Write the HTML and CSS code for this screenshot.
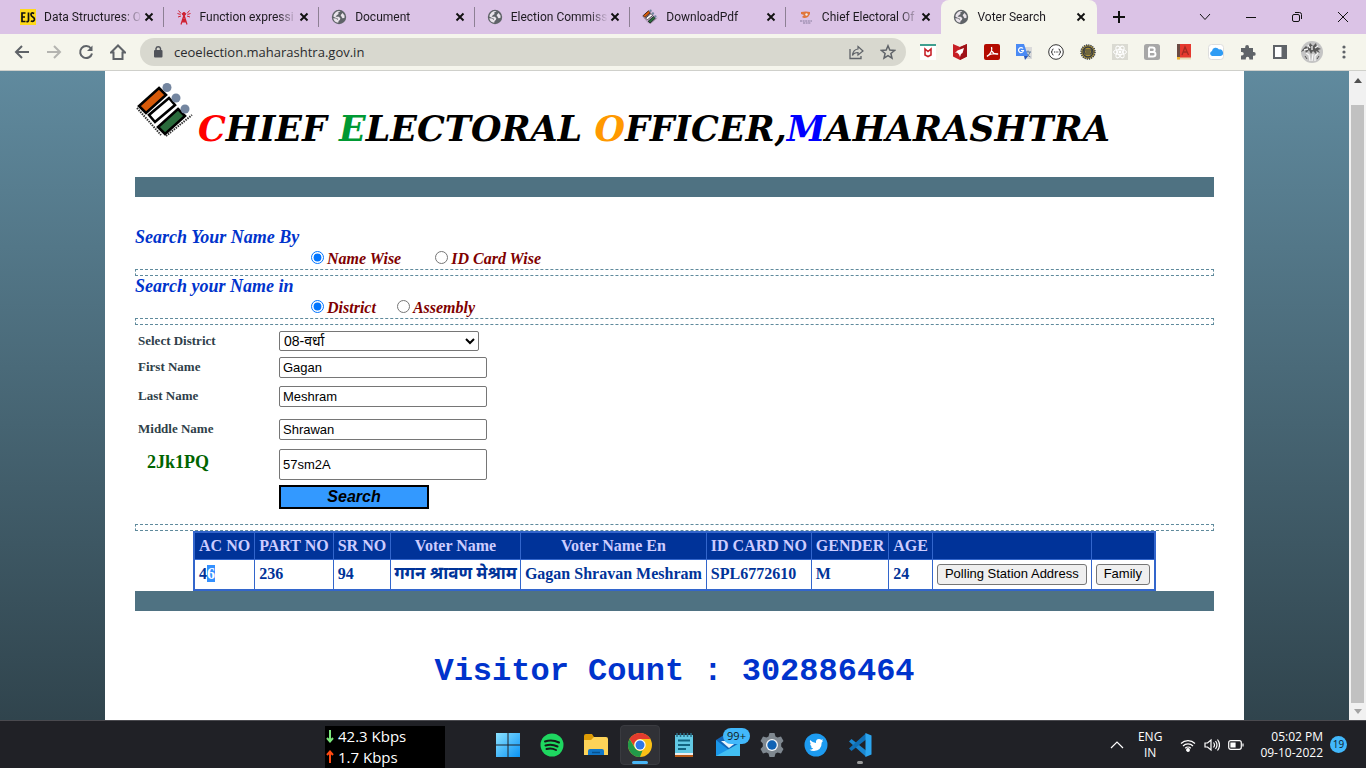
FILE: index.html
```html
<!DOCTYPE html>
<html lang="en">
<head>
<meta charset="utf-8">
<title>Voter Search</title>
<link rel="stylesheet" href="styles.css">
</head>
<body>
<svg class="defs" aria-hidden="true">
  <defs>
    <symbol id="globe" viewBox="0 0 16 16"><circle cx="8" cy="8" r="7.200" fill="#5f6368"/><path d="M9.500 2.200 7.200 3.400 7.600 5 5.800 6.200 4.600 7.800 8 7.800 9.400 9.400 8.800 11 7.600 12 7.200 13.800A6 6 0 0 1 2.200 9.200L5.200 9.600 6.600 11 7 9.800 4 8.400 2.300 7.600A6 6 0 0 1 9.500 2.200z" fill="#e9e3ea"/><path d="M11.600 4 13.600 6.800 13.400 9 11.400 9.200 10.400 7.400 9.600 6.200 10.600 5z" fill="#e9e3ea"/></symbol>
    <symbol id="x" viewBox="0 0 10 10"><path d="M1.500 1.500 8.500 8.500M8.500 1.500 1.500 8.500" stroke="#111" stroke-width="1.900" fill="none"/></symbol>
    <symbol id="eci" viewBox="0 0 60 56">
      <g stroke="#000" stroke-width="2.600">
        <path d="M24 5 31 12 11 30 4 23z" fill="#d65a0a"/>
        <path d="M34 15 40 22 20 39 14 32z" fill="#fff"/>
        <path d="M43 26 50 33 30 51 23 44z" fill="#2a6b3c"/>
      </g>
      <g fill="#7486a0"><circle cx="32" cy="4.500" r="4.500"/><circle cx="41" cy="15" r="4.500"/><circle cx="50" cy="26" r="4.500"/></g>
      <path d="M2 25 26 52M31 53 57 32" stroke="#333" stroke-width="2" stroke-dasharray="1.500 1" fill="none"/>
    </symbol>
  </defs>
</svg>

<header class="browser">
  <div class="tabstrip">
    <nav class="tabs" aria-label="Tabs">
      <div class="tab"><svg class="fav" viewBox="0 0 16 16"><path fill="#ffd91a" d="M0 0h16v16H0z"/><path d="M5.500 4H2v8.500h3.500M2 8h3M8.500 3.500v8q0 1.500-2.200 1M14.200 4.500Q11 3 11 5.600q0 1.600 1.800 2.400 2 1 1.500 3-.8 2-3.500 1" fill="none" stroke="#111" stroke-width="1.700"/></svg><span class="tab-title">Data Structures: O</span><button class="close" aria-label="Close tab"><svg><use href="#x"/></svg></button></div>
      <div class="tab"><svg class="fav" viewBox="0 0 16 16" fill="none" stroke="#cf2233"><path d="M8 6 5 15.500M8 6l3 9.500M6.500 10h3M6 13h4.500M6.500 10l4 3M9.500 10 6 13" stroke-width="1.200"/><path d="M5 7 2 8M5 4.500 2.500 1.500M11 7l3 1M11 4.500 13.500 1.500M4.500 5.500l-3-1M11.500 5.500l3-1" stroke-width="1"/><circle cx="8" cy="5" r="1.500" fill="#cf2233"/></svg><span class="tab-title">Function expressi</span><button class="close" aria-label="Close tab"><svg><use href="#x"/></svg></button></div>
      <div class="tab"><svg class="fav"><use href="#globe"/></svg><span class="tab-title">Document</span><button class="close" aria-label="Close tab"><svg><use href="#x"/></svg></button></div>
      <div class="tab"><svg class="fav"><use href="#globe"/></svg><span class="tab-title">Election Commiss</span><button class="close" aria-label="Close tab"><svg><use href="#x"/></svg></button></div>
      <div class="tab"><svg class="fav"><use href="#eci"/></svg><span class="tab-title">DownloadPdf</span><button class="close" aria-label="Close tab"><svg><use href="#x"/></svg></button></div>
      <div class="tab last"><svg class="fav" viewBox="0 0 16 16"><path d="M3 3q5-1 9 0v2l-2 3q-4 2-6 0l2-2-3-1z" fill="#e0763c"/><circle cx="8.500" cy="5.500" r="1.200" fill="#eee"/><path d="M2 12h12M5 14h8" stroke="#867b9b" stroke-dasharray="2 .6"/></svg><span class="tab-title">Chief Electoral Of</span><button class="close" aria-label="Close tab"><svg><use href="#x"/></svg></button></div>
      <div class="tab active"><svg class="fav"><use href="#globe"/></svg><span class="tab-title">Voter Search</span><button class="close" aria-label="Close tab"><svg><use href="#x"/></svg></button></div>
    </nav>
    <button class="newtab" aria-label="New tab"><svg viewBox="0 0 12 12"><path d="M6 0v12M0 6h12" stroke="#111" stroke-width="2"/></svg></button>
    <div class="winbtns">
      <button aria-label="Search tabs"><svg viewBox="0 0 12 12"><path d="m1 3 5 5.500L11 3"/></svg></button>
      <button aria-label="Minimize"><svg viewBox="0 0 12 12"><path d="M1 6.500h10"/></svg></button>
      <button aria-label="Restore"><svg viewBox="0 0 12 12"><rect x="1.500" y="3.500" width="7" height="7" rx="1.500"/><path d="M4 1.500h4.500q2 0 2 2V8"/></svg></button>
      <button aria-label="Close"><svg viewBox="0 0 12 12"><path d="m1 1 10 10M11 1 1 11"/></svg></button>
    </div>
  </div>
  <div class="toolbar">
    <div class="navbtns">
      <button aria-label="Back"><svg viewBox="0 0 16 16" stroke="#5f6368"><path d="M15 8H2M8 2 2 8l6 6"/></svg></button>
      <button aria-label="Forward"><svg viewBox="0 0 16 16" stroke="#b4b4b0"><path d="M1 8h13M8 2l6 6-6 6"/></svg></button>
      <button aria-label="Reload"><svg viewBox="0 0 16 16" stroke="#5f6368"><path d="M13 4.500A6 6 0 1 0 14 9.500"/><path d="M14.500 1.500v5.500H9z" fill="#5f6368" stroke="none"/></svg></button>
      <button aria-label="Home"><svg viewBox="0 0 16 16" stroke="#5f6368"><path d="M1 8.500 8 1.500l7 7h-2.500V15h-9V8.500z"/></svg></button>
    </div>
    <div class="omnibox">
      <svg class="lock" viewBox="0 0 10 14"><rect x="1" y="5" width="8.500" height="7.500" rx="1" fill="#50535a"/><path d="M3 5V3.500a2.300 2.300 0 0 1 4.500 0V5" fill="none" stroke="#50535a" stroke-width="1.400"/></svg>
      <input aria-label="Address" value="ceoelection.maharashtra.gov.in">
      <svg viewBox="0 0 16 16" fill="none" stroke="#5f6368"><path d="M2 5v9.500h11V12" stroke-width="1.300"/><path d="M10 2.500 15 7l-5 4V8.500Q6 8.500 4.500 11.500 5 5.500 10 5z" stroke-width="1.200"/></svg>
      <svg viewBox="0 0 16 16" fill="none" stroke="#5f6368" stroke-width="1.500"><path d="m8 1.800 1.800 4.300 4.700.4-3.600 3 1.100 4.600L8 11.700l-4 2.400 1.100-4.600-3.600-3 4.700-.4z"/></svg>
    </div>
    <div class="exts">
      <svg viewBox="0 0 16 16"><path fill="#fff" d="M0 0h16v16H0z"/><path fill="#3f9f8f" d="M0 0h16v2H0z"/><path d="M5 5v6l3 1.500 3-1.500V5L8 7.500z" fill="none" stroke="#c8232c" stroke-width="1.600"/></svg>
      <svg viewBox="0 0 16 16"><path d="M1 0 8 3l7-3v12.500L8 16l-7-3.500z" fill="#c71f25"/><path d="M8 3l7-3v12.500L8 16z" fill="#9f1218"/><path d="M12 4 10.500 9 9 10l-1 3-1-2.500L5 8.500 3 9 5.500 6.500z" fill="#fff"/></svg>
      <svg viewBox="0 0 16 16"><rect width="16" height="16" rx="2" fill="#b30b00"/><path d="M7.500 3q1.500 5-4.500 9.500M8 7q2 4 6 3Q8 8.500 3 12" fill="none" stroke="#fff" stroke-width="1.300"/></svg>
      <svg viewBox="0 0 16 16"><path d="M7 3h9v12H9z" fill="#dadada"/><path d="M9 8h6M12 6.500V8M14 8q-1 4-4 5M10.500 9q1 3 4 4" fill="none" stroke="#607d9b"/><path d="M0 0h8l4 12H0z" fill="#4a8af4"/><path d="M8 12h4l-3 4z" fill="#2857b8"/><path d="M7 4.500A2.500 2.500 0 1 0 7.500 6.500H5" fill="none" stroke="#fff" stroke-width="1.200"/></svg>
      <svg viewBox="0 0 16 16"><circle cx="8" cy="8" r="7.300" fill="#fff" stroke="#333"/><path d="M5.500 5Q4 5 4.200 6.500T3 8q1.200 0 1.200 1.500T5.500 11M10.500 5Q12 5 11.800 6.500T13 8q-1.200 0-1.200 1.500T10.500 11M6 8h1M7.700 8h1M9.300 8h1" fill="none" stroke="#333"/></svg>
      <svg viewBox="0 0 16 16"><circle cx="8" cy="8" r="7" fill="#ab9136" stroke="#343a45" stroke-width="1.500" stroke-dasharray="1.200 1"/><circle cx="8" cy="8" r="5" fill="none" stroke="#343a45" stroke-width="1.300"/><path d="M4 6h8l-1 4H5zM5.500 8h5" fill="#ab9136" stroke="#343a45"/></svg>
      <svg viewBox="0 0 16 16"><path fill="#dadad2" d="M0 0h16v16H0z"/><g fill="none" stroke="#fff"><ellipse cx="8" cy="8" rx="6.500" ry="2.600"/><ellipse cx="8" cy="8" rx="6.500" ry="2.600" transform="rotate(60 8 8)"/><ellipse cx="8" cy="8" rx="6.500" ry="2.600" transform="rotate(120 8 8)"/></g><circle cx="8" cy="8" r="1.400" fill="#fff"/></svg>
      <svg viewBox="0 0 16 16"><rect width="16" height="16" rx="2.500" fill="#a7a7a7"/><path d="M5 3.500v9h4q2.500 0 2.500-2.300T9 8H5M5 3.500h3.500q2.200 0 2.200 2.200T8.500 8" fill="none" stroke="#fff" stroke-width="1.900"/></svg>
      <svg viewBox="0 0 16 16"><path d="M1 0h14v15H1z" fill="#e5392f"/><path d="M1 0h3v15H1z" fill="#6b4a42"/><path d="m6 11 3-8 3.500 8M7 8h4.500" fill="none" stroke="#a32a22" stroke-width="1.300"/><path d="M1 13.500h14v2H1z" fill="#e9d9b5"/><path d="M1 13h3v2.500H1z" fill="#f0b32c"/></svg>
      <svg viewBox="0 0 16 16"><rect x=".5" y=".5" width="15" height="15" rx="3" fill="#fff" stroke="#ddd"/><path d="M4 12a2.600 2.600 0 0 1 0-5 3.800 3.800 0 0 1 7-1.500A3.300 3.300 0 0 1 12.500 12z" fill="#2f9cf4"/></svg>
      <svg viewBox="0 0 16 16"><path d="M1 4h4.200V3a1.900 1.900 0 0 1 3.800 0v1h4v4h.8a1.900 1.900 0 0 1 0 3.800H13V15.500H9.300v-1a1.700 1.700 0 0 0-3.500 0v1H1V11.500h1a1.700 1.700 0 0 0 0-3.500H1z" fill="#5f6368"/></svg>
      <svg viewBox="0 0 16 16"><path d="M2 2h12v12H2z" fill="#fff" stroke="#5f6368" stroke-width="2"/><path d="M9.500 2H15v12H9.500z" fill="#5f6368"/></svg>
      <svg class="avatar" viewBox="0 0 22 22"><circle cx="11" cy="11" r="11" fill="#c4c4c4"/><path d="M2 8 5 5l2 2 2-5 3 3 3-3 1 4 4 2-3 1 2 3-4-2 1 4-4-4-2 3-2-4-3 3-1-3-4 2z" fill="#5a5a5a"/><path d="M5 12l3 2 1 6M12 13l-1 7M17 12l-3 3v5M7 4l2 3M14 7l3-2M3 9l4-1M11 5v4" stroke="#f6f6f6" stroke-width="1.300" fill="none"/><path d="M4 15l2 3M16 18l2-3" stroke="#555"/></svg>
      <svg viewBox="0 0 16 16" fill="#5f6368"><circle cx="8" cy="3" r="1.600"/><circle cx="8" cy="8" r="1.600"/><circle cx="8" cy="13" r="1.600"/></svg>
    </div>
  </div>
</header>

<div class="viewport">
  <div class="backdrop">
    <main class="sheet">
      <div class="masthead">
        <svg class="emblem"><use href="#eci"/></svg>
        <h1><span class="r">C</span>HIEF <span class="g">E</span>LECTORAL <span class="o">O</span>FFICER,<span class="b">M</span>AHARASHTRA</h1>
      </div>
      <div class="bar"></div>
      <form class="search">
        <fieldset>
          <legend>Search Your Name By</legend>
          <div class="choices wide"><label><input type="radio" name="by" checked>Name Wise</label><label><input type="radio" name="by">ID Card Wise</label></div>
        </fieldset>
        <div class="rule"></div>
        <fieldset>
          <legend>Search your Name in</legend>
          <div class="choices"><label><input type="radio" name="in" checked>District</label><label><input type="radio" name="in">Assembly</label></div>
        </fieldset>
        <div class="rule"></div>
        <div class="fields">
          <label for="district">Select District</label>
          <select id="district"><option>08-वर्धा</option></select>
          <label for="first">First Name</label>
          <input id="first" value="Gagan">
          <label for="last">Last Name</label>
          <input id="last" value="Meshram">
          <label for="middle">Middle Name</label>
          <input id="middle" value="Shrawan">
          <label for="code" class="captcha">2Jk1PQ</label>
          <input id="code" value="57sm2A">
          <button type="button" class="go">Search</button>
        </div>
      </form>
      <div class="rule"></div>
      <table class="results">
        <thead><tr><th>AC NO</th><th>PART NO</th><th>SR NO</th><th>Voter Name</th><th>Voter Name En</th><th>ID CARD NO</th><th>GENDER</th><th>AGE</th><th></th><th></th></tr></thead>
        <tbody><tr><td>4<span class="sel">6</span></td><td>236</td><td>94</td><td class="hindi">गगन श्रावण मेश्राम</td><td>Gagan Shravan Meshram</td><td>SPL6772610</td><td>M</td><td>24</td><td><button type="button">Polling Station Address</button></td><td><button type="button">Family</button></td></tr></tbody>
      </table>
      <div class="bar"></div>
      <p class="visitors">Visitor Count : 302886464</p>
    </main>
  </div>
  <div class="scrollbar">
    <svg viewBox="0 0 16 16"><path d="m4 11 4-5 4 5z" fill="#505050"/></svg>
    <div class="thumb"></div>
    <svg viewBox="0 0 16 16"><path d="m4 6 4 5 4-5z" fill="#a3a3a3"/></svg>
  </div>
</div>

<footer class="taskbar">
  <div class="net">
    <div><svg viewBox="0 0 10 14"><path d="M5 1v11M2 9l3 3.500L8 9" stroke="#7be77b"/></svg>42.3 Kbps</div>
    <div><svg viewBox="0 0 10 14"><path d="M5 13V2M2 5l3-3.500L8 5" stroke="#ff4a12"/></svg>1.7 Kbps</div>
  </div>
  <div class="apps">
    <button aria-label="Start"><svg viewBox="0 0 24 24"><defs><linearGradient id="w" x2="1" y2="1"><stop stop-color="#8be2ff"/><stop offset="1" stop-color="#0a93f5"/></linearGradient></defs><path d="M0 0h11.500v11.500H0zM12.500 0H24v11.500H12.500zM0 12.500h11.500V24H0zM12.500 12.500H24V24H12.500z" fill="url(#w)"/></svg></button>
    <button aria-label="Spotify"><svg viewBox="0 0 24 24"><circle cx="12" cy="12" r="11.500" fill="#1ed760"/><path d="M5 8.500q7-2.500 14 1M5.500 12.500q6-2 12 1M6.500 16q5-1.500 9.500 1" fill="none" stroke="#151a18" stroke-width="2" stroke-linecap="round"/></svg></button>
    <button aria-label="File Explorer"><svg viewBox="0 0 24 24"><path d="M0 3q0-2 2-2h6l2 3v5H0z" fill="#dd9b05"/><path d="M0 7h7l3-3h12q2 0 2 2v16H0z" fill="#fdd358"/><path d="M4 22v-4q0-2 2-2h12q2 0 2 2v4z" fill="#1177c9"/><path d="M8 19.500h8" stroke="#07518e" stroke-width="1.500"/></svg></button>
    <button class="current" aria-label="Chrome"><svg viewBox="0 0 24 24"><circle cx="12" cy="12" r="12" fill="#fbc116"/><path d="M1.600 6A12 12 0 0 1 22.400 6H12a6 6 0 0 0-5.800 7z" fill="#e33b2e"/><path d="M1.600 6 7 15a6 6 0 0 0 7.500 2.500L12 24A12 12 0 0 1 1.600 6z" fill="#229a49"/><circle cx="12" cy="12" r="5.700" fill="#fff"/><circle cx="12" cy="12" r="4.500" fill="#2f77e6"/></svg></button>
    <button aria-label="Notepad"><svg viewBox="0 0 24 24"><path d="M3 2h18v19H3z" fill="#62c9e4"/><path d="M3 20h18v2H3z" fill="#eee"/><path d="M3 22h18v2H3z" fill="#b75a18"/><path d="M5 0v4M8.500 0v4M12 0v4M15.500 0v4M19 0v4" stroke="#2b718a" stroke-width="1.500"/><path d="M6 7.500h12M6 12h12M6 16h8" stroke="#126480" stroke-width="1.800"/></svg></button>
    <button aria-label="Mail"><svg viewBox="0 0 24 24"><path d="M0 7 8 2h14l2 5v16H0z" fill="#1266b7"/><path d="m0 7 13 10L24 9v14H0z" fill="#1a96e8"/><path d="m0 23 24-13v13z" fill="#42bff3"/><path d="M5 8h17l-9 7z" fill="#eaf4fb"/></svg><span class="badge">99+</span></button>
    <button aria-label="Settings"><svg viewBox="0 0 24 24"><path d="m9.500 0-1 3.500-2 1L3 3.500.5 8l2.300 2.500v3L.5 16 3 20.500l3.500-1 2 1 1 3.500h5l1-3.500 2-1 3.500 1 2.500-4.500-2.300-2.500v-3L23.500 8 21 3.500l-3.500 1-2-1-1-3.500z" fill="#7f8890"/><circle cx="12" cy="12" r="6" fill="#f2f5f8"/><circle cx="12" cy="12" r="4.700" fill="#0f62b4"/></svg></button>
    <button aria-label="Twitter"><svg viewBox="0 0 24 24"><circle cx="12" cy="12" r="11.500" fill="#1d9bf0"/><path d="M6 7q3 3 6 3-.5-4 3-4 1.500 0 2.200.8L19 6.500l-1 1.800 1.200-.2-1.500 1.500q0 8-7.700 8.400-2.700 0-4.500-1.300 2.500 0 3.700-1.200-2-.5-2.500-2h1.200Q6 12.500 6 10.500l1.200.3Q5.200 9 6 7z" fill="#fff"/></svg></button>
    <button class="open" aria-label="Visual Studio Code"><svg viewBox="0 0 24 24"><path d="M1 8.500 3.500 6 18 17.500v6.300z" fill="#1b86cf"/><path d="m1 15.500 2.500 2.500L18 6.500V.2z" fill="#0f6fb6"/><path d="m17.500 0 6 2.500v19l-6 2.500z" fill="#2ba5ef"/></svg></button>
  </div>
  <div class="tray">
    <svg class="chev" viewBox="0 0 14 14"><path d="m1 10 6-6 6 6"/></svg>
    <div class="lang">ENG<br>IN</div>
    <div class="status">
      <svg viewBox="0 0 16 16"><path d="M1 6.500a10 10 0 0 1 14 0M3 9a7 7 0 0 1 10 0M5.200 11.300a4 4 0 0 1 5.600 0"/><circle cx="8" cy="13" r="1.300" fill="#fff"/></svg>
      <svg viewBox="0 0 16 16"><path d="M1 6v4h2.500L7 13V3L3.500 6zM9.500 5.500q2 2.500 0 5M11.500 4q3 4 0 8M13.500 2.500q4 5.500 0 11"/></svg>
      <svg viewBox="0 0 16 16"><rect x=".7" y="3.700" width="12.600" height="8.600" rx="2"/><path d="M3 6h4v4H3z" fill="#fff"/><path d="M15 6.500v3"/></svg>
    </div>
    <div class="clock">05:02 PM<br>09-10-2022</div>
    <span class="count">19</span>
  </div>
</footer>
</body>
</html>
```

FILE: styles.css
```css
* { box-sizing: border-box; }
body {
  margin: 0;
  height: 100vh;
  display: flex;
  flex-direction: column;
  overflow: hidden;
  font-family: "Liberation Serif", "Noto Sans", serif;
  background: #fff;
}
.defs { position: absolute; width: 0; height: 0; }
svg { display: block; flex: none; }
button { font: inherit; }

/* Browser frame */
.browser { font-family: "Open Sans", sans-serif; flex: none; }
.browser button { border: 0; padding: 0; background: none; display: grid; place-items: center; }
.tabstrip { height: 34px; background: #dbc3e6; display: flex; align-items: center; padding-left: 8px; }
.tabs { flex: 0 1 1089px; min-width: 0; display: grid; grid-template-columns: repeat(7, minmax(0, 1fr)); height: 34px; align-items: center; }
.tab { display: flex; align-items: center; height: 20px; padding: 0 9px 0 12px; border-right: 1px solid #8d8094; font: 12px Roboto, sans-serif; color: #1d1a20; }
.tab.last { border-color: transparent; }
.tab.active { height: 34px; background: #f5f5ec; border: 0; border-radius: 8px 8px 0 0; padding-right: 11px; }
.fav { width: 16px; height: 16px; margin-right: 8px; }
.tab-title { flex: 1; min-width: 0; overflow: hidden; white-space: nowrap; line-height: 16px; -webkit-mask-image: linear-gradient(90deg, #000 80%, transparent); mask-image: linear-gradient(90deg, #000 80%, transparent); }
.close { width: 10px; height: 10px; margin-left: 2px; }
.close svg { width: 10px; height: 10px; }
.newtab { margin-left: 16px; }
.newtab svg { width: 12px; height: 12px; }
.winbtns { margin-left: auto; display: flex; height: 28px; }
.winbtns button { width: 46px; }
.winbtns svg { width: 12px; height: 12px; fill: none; stroke: #111; }
.toolbar { height: 37px; background: #f5f5ec; border-bottom: 1px solid #cfd0cb; display: flex; align-items: center; }
.navbtns { display: flex; gap: 16px; padding-left: 14px; }
.navbtns svg { width: 16px; height: 16px; fill: none; stroke-width: 2; }
.omnibox { flex: 1; height: 28px; margin-left: 14px; background: #d8d8cf; border-radius: 14px; display: flex; align-items: center; gap: 16px; padding: 0 10px 0 13px; }
.omnibox svg { width: 16px; height: 16px; }
.omnibox .lock { width: 10px; height: 14px; }
.omnibox input { flex: 1; min-width: 0; margin-left: -5px; border: 0; padding: 0; background: none; font: 13px "Open Sans", sans-serif; color: #2a2b2e; }
.exts { display: flex; align-items: center; gap: 16px; padding: 0 14px; }
.exts svg { width: 16px; height: 16px; }
.exts .avatar { width: 22px; height: 22px; margin: 0 -3px; }

/* Page */
.viewport { flex: 1; min-height: 0; display: flex; }
.backdrop { flex: 1; min-width: 0; padding: 0 105px; background: linear-gradient(#608a9e, #30444d); }
.sheet { height: 100%; background: #fff; padding: 0 30px; overflow: hidden; }
.masthead { display: flex; align-items: flex-start; height: 106px; padding-top: 12px; }
.emblem { width: 60px; height: 56px; margin-right: 3px; }
h1 { margin: 26px 0 0; font: italic bold 35px/40px "DejaVu Serif", serif; color: #000; white-space: nowrap; }
.r { color: #f00; }
.g { color: #093; }
.o { color: #f90; }
.b { color: #00f; }
.bar { height: 20px; background: #4f7282; }
.search { padding: 30px 0 15px; }
fieldset { border: 0; margin: 0; padding: 0; min-width: 0; }
legend { padding: 0; font: italic bold 18px/21px "Liberation Serif", serif; color: #03c; }
.choices { display: flex; gap: 21px; padding-left: 176px; height: 21px; }
.choices.wide { gap: 34px; }
.choices label { display: flex; align-items: center; font: italic bold 16px/21px "Liberation Serif", serif; color: maroon; }
.choices input { width: 13px; height: 13px; margin: 0 3px 2px 0; }
.rule { height: 7px; border: 1px dashed #5f8a9c; }
.fields { display: grid; grid-template-columns: 141px 208px; grid-template-rows: 20px 22px 26px 30px 31px 24px; row-gap: 5px; align-items: center; padding: 6px 0 0 3px; }
.fields label { font: bold 13px/16px "Liberation Serif", serif; color: #2f3f4a; }
.fields input, .fields select { width: 208px; height: 21px; border: 1px solid #767676; border-radius: 2px; background: #fff; padding: 1px 3px; font: 13px "Liberation Sans", "Noto Sans", sans-serif; color: #000; }
.fields select { width: 200px; height: 20px; padding: 0; font-size: 14px; }
.fields #code { height: 31px; }
.fields .captcha { padding: 0 0 6px 9px; font-size: 18px; color: #006400; }
.go { grid-column: 2; width: 150px; height: 24px; border: 2px solid #000; background: #39f; padding: 0; font: italic bold 16px/18px "Liberation Sans", sans-serif; color: #000; }
.results { margin: 0 auto; border-collapse: collapse; border: 2px solid #36c; font: bold 16px/18px "Liberation Serif", "Noto Sans", serif; color: #039; white-space: nowrap; }
.results th, .results td { border: 1px solid #36c; padding: 4px; text-align: left; }
.results th { background: #039; color: #ccf; text-align: center; }
.results td { height: 30px; padding: 2px 4px; }
.results .hindi { font-size: 17px; padding: 2px 3px; }
.results button { display: block; height: 21px; padding: 0 7px; border: 1px solid #767676; border-radius: 3px; background: #efefef; font: 13px/18px "Liberation Sans", sans-serif; color: #000; }
.sel { background: #3390ff; color: #fff; }
.visitors { margin: 41px 0 0; text-align: center; font: bold 32px/40px "Liberation Mono", monospace; color: #03c; }
.scrollbar { width: 17px; background: #f1f1f1; display: flex; flex-direction: column; align-items: center; padding: 1px 0; }
.scrollbar svg { width: 16px; height: 16px; }
.thumb { flex: 1; width: 13px; margin: 17px 0 0; background: #c1c1c1; }

/* Taskbar */
.taskbar { flex: none; height: 48px; background: #202126; border-top: 1px solid #4a4a4f; display: grid; grid-template-columns: 1fr auto 1fr; align-items: center; color: #fff; font-family: "Open Sans", sans-serif; }
.net { justify-self: end; width: 120px; height: 42px; margin: 4px 41px 0 0; background: #000; font-size: 15px; line-height: 21px; }
.net div { display: flex; align-items: center; gap: 3px; }
.net svg { width: 10px; height: 14px; fill: none; stroke-width: 2; }
.apps { display: flex; gap: 4px; padding-left: 2px; }
.apps button { position: relative; width: 40px; height: 40px; border: 1px solid transparent; border-radius: 4px; padding: 0; background: none; display: grid; place-items: center; }
.apps svg { width: 24px; height: 24px; }
.apps .current { background: #303136; border-color: #3a3b40; }
.current::after, .open::after { content: ""; position: absolute; bottom: 0; width: 16px; height: 3px; border-radius: 2px; background: #48b5f5; }
.open::after { width: 6px; background: #9a9a9a; }
.badge { position: absolute; top: 2px; left: 14px; width: 27px; height: 16px; border-radius: 8px; background: #42b8fb; color: #101820; font-size: 11px; line-height: 16px; }
.tray { justify-self: end; display: flex; align-items: center; padding-right: 19px; font-size: 12px; line-height: 16px; }
.tray svg { fill: none; stroke: #fff; stroke-width: 1.2; }
.chev { width: 14px; height: 14px; margin-right: 14px; }
.lang { text-align: center; margin-right: 18px; }
.status { display: flex; gap: 8px; margin-right: 16px; }
.status svg { width: 16px; height: 16px; }
.clock { text-align: right; margin-right: 7px; }
.count { width: 17px; height: 17px; border-radius: 9px; background: #42b8fb; color: #10202c; text-align: center; font-size: 10px; line-height: 17px; }
```
